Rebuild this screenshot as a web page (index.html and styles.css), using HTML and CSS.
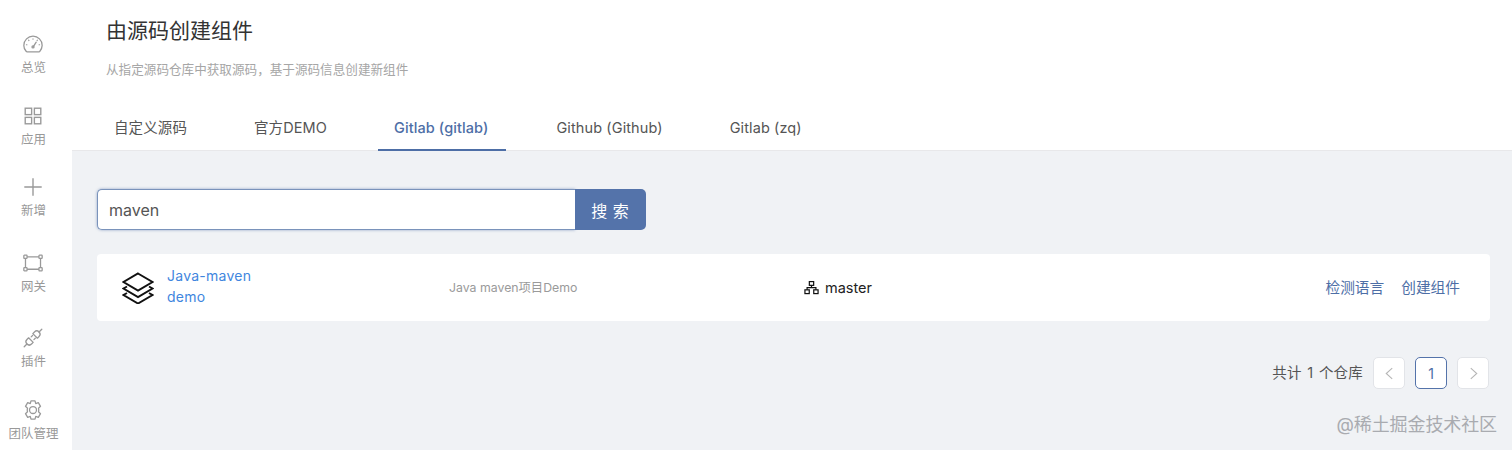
FILE: index.html
```html
<!DOCTYPE html>
<html lang="zh">
<head>
<meta charset="utf-8">
<title>由源码创建组件</title>
<link rel="stylesheet" href="styles.css">
</head>
<body>
<div class="app">
  <nav class="side">
    <a class="nav-item nav-first"><svg class="nav-icon" viewBox="0 0 24 24" fill="none" stroke="currentColor" stroke-width="1.400" stroke-linecap="round" stroke-linejoin="round"><path d="M5.600 20.500h12.800c.5 0 .9-.2 1.100-.6A10.400 10.400 0 0 0 22 13.500C22 8 17.500 3.500 12 3.500S2 8 2 13.500c0 2.400.9 4.700 2.500 6.400.3.400.7.600 1.100.600z"/><path d="M12 15.500l3.500-5.500"/><circle cx="12" cy="15.200" r="1.100"/><path d="M12 6.200v.6M7.200 7.800l.4.5M4.800 12.800h.6M19.200 12.800h-.6M16.800 7.800l-.4.5" stroke-width="1.200"/></svg><span>总览</span></a>
    <a class="nav-item"><svg class="nav-icon" viewBox="0 0 24 24" fill="none" stroke="currentColor" stroke-width="1.500"><rect x="3.500" y="3.500" width="7" height="7"/><rect x="13.500" y="3.500" width="7" height="7"/><rect x="3.500" y="13.500" width="7" height="7"/><rect x="13.500" y="13.500" width="7" height="7"/></svg><span>应用</span></a>
    <a class="nav-item nav-wide"><svg class="nav-icon" viewBox="0 0 24 24" fill="none" stroke="currentColor" stroke-width="1.500"><path d="M12 2.500v19M2.500 12h19"/></svg><span>新增</span></a>
    <a class="nav-item nav-wide"><svg class="nav-icon" viewBox="0 0 24 24" fill="none" stroke="currentColor" stroke-width="1.400"><rect x="2" y="3.500" width="3.500" height="3.500" rx=".6"/><rect x="18.500" y="3.500" width="3.500" height="3.500" rx=".6"/><rect x="2" y="17" width="3.500" height="3.500" rx=".6"/><rect x="18.500" y="17" width="3.500" height="3.500" rx=".6"/><path d="M5.500 5.200h13M5.500 18.800h13M3.800 7v10M20.200 7v10"/></svg><span>网关</span></a>
    <a class="nav-item"><svg class="nav-icon" viewBox="0 0 24 24" fill="none" stroke="currentColor" stroke-width="1.400" stroke-linecap="round" stroke-linejoin="round"><path d="M11.800 7.200l5 5 1.800-1.800a3.500 3.500 0 0 0-5-5z"/><path d="M18.600 5.400l3-3"/><path d="M12.200 16.800l-5-5-1.800 1.800a3.500 3.500 0 0 0 5 5z"/><path d="M5.400 18.600l-3 3"/><path d="M10 10.800l1.500-1.500M13 13.800l1.500-1.500"/></svg><span>插件</span></a>
    <a class="nav-item"><svg class="nav-icon" viewBox="0 0 24 24" fill="none" stroke="currentColor" stroke-width="1.400" stroke-linejoin="round"><path d="M9.800 2h4.400l.8 3 2.800-1 2.400 4-2.200 2.100a6 6 0 0 1 0 3.800l2.200 2.100-2.400 4-2.800-1-.8 3H9.800l-.8-3-2.800 1-2.400-4 2.200-2.100a6 6 0 0 1 0-3.800L3.800 8l2.400-4 2.800 1z"/><circle cx="12" cy="12" r="3.800"/></svg><span>团队管理</span></a>
  </nav>
  <main class="main">
    <header class="head">
      <h1 class="title">由源码创建组件</h1>
      <p class="desc">从指定源码仓库中获取源码，基于源码信息创建新组件</p>
      <div class="tabs">
        <a class="tab">自定义源码</a>
        <a class="tab">官方DEMO</a>
        <a class="tab tab-on">Gitlab (gitlab)</a>
        <a class="tab">Github (Github)</a>
        <a class="tab">Gitlab (zq)</a>
      </div>
    </header>
    <section class="body">
      <form class="search">
        <input class="search-input" type="text" value="maven">
        <button class="search-btn" type="button">搜 索</button>
      </form>
      <div class="repo">
        <svg class="repo-icon" viewBox="0 0 32 32" fill="none" stroke="#111" stroke-width="2" stroke-linejoin="miter"><path d="M16 1.500L30.500 10 16 18.500 1.500 10z"/><path d="M5 14.500L1.500 16.500 16 25l14.500-8.500-3.500-2"/><path d="M5 21L1.500 23 16 31.500 30.500 23 27 21"/></svg>
        <div class="repo-name"><a>Java-maven</a><a>demo</a></div>
        <div class="repo-desc">Java maven项目Demo</div>
        <div class="repo-branch">
          <svg class="branch-icon" viewBox="0 0 16 16" fill="none" stroke="#111" stroke-width="1.300"><rect x="5.700" y="1.700" width="4.600" height="4"/><rect x="1" y="10.500" width="4.600" height="4"/><rect x="10.400" y="10.500" width="4.600" height="4"/><path d="M8 5.700v2.500M3.300 10.500V8.200h9.400v2.300"/></svg>
          <span>master</span>
        </div>
        <div class="repo-actions"><a>检测语言</a><a>创建组件</a></div>
      </div>
      <div class="pager">
        <span class="total">共计 1 个仓库</span>
        <a class="page page-off"><svg viewBox="0 0 12 12" class="chev" fill="none" stroke="currentColor" stroke-width="1"><path d="M8.500 1L3 6l5.500 5"/></svg></a>
        <a class="page page-on">1</a>
        <a class="page page-off"><svg viewBox="0 0 12 12" class="chev" fill="none" stroke="currentColor" stroke-width="1"><path d="M3.500 1L9 6l-5.500 5"/></svg></a>
      </div>
      <div class="mark">@稀土掘金技术社区</div>
    </section>
  </main>
</div>
</body>
</html>
```
FILE: styles.css
```css
* { box-sizing: border-box; }
html, body { margin: 0; height: 450px; overflow: hidden; }
body {
  font-family: Inter, "Noto Sans CJK SC", sans-serif;
  color: #333;
  background: #fff;
}
.app { display: flex; height: 450px; }
.side {
  width: 72px;
  flex: none;
  background: #fff;
  display: flex;
  flex-direction: column;
  align-items: center;
  padding-right: 5px;
  color: #999;
}
.nav-item {
  flex: none;
  display: flex;
  flex-direction: column;
  align-items: center;
  height: 71.500px;
  font-size: 12.500px;
  line-height: 16px;
  white-space: nowrap;
}
.nav-wide { height: 75.500px; }
.nav-first { margin-top: 33px; }
.nav-icon { width: 22px; height: 22px; margin-bottom: 5px; }
.main { flex: 1; min-width: 0; display: flex; flex-direction: column; }
.head { background: #fff; height: 151px; padding: 16px 0 0 34px; border-bottom: 1px solid #e8e8ea; }
.title { margin: 0; font-size: 21px; font-weight: 400; line-height: 30px; color: #333; }
.desc { margin: 16px 0 0; font-size: 12.600px; line-height: 16px; color: #a6a6a6; }
.tabs { display: flex; gap: 35px; margin: 29px 0 0 -8px; height: 44px; }
.tab {
  padding: 0 16px;
  font-size: 14.500px;
  line-height: 42px;
  height: 44px;
  color: #555;
  letter-spacing: .1px;
  border-bottom: 2px solid transparent;
  white-space: nowrap;
}
.tab-on { color: #4d6ea6; font-weight: 500; border-bottom-color: #4d6ea6; padding-right: 18px; margin-right: -1px; }
.body { flex: 1; background: #f0f2f5; padding: 38px 23px 0 25px; position: relative; }
.search { display: flex; width: 549px; height: 41px; }
.search-input {
  flex: 1;
  min-width: 0;
  border: 1px solid #7a93bb;
  border-right: 0;
  border-radius: 5px 0 0 5px;
  padding: 0 11px;
  font: 16px Inter, sans-serif;
  color: #555;
  background: #fff;
  box-shadow: 0 0 3px rgba(77, 110, 166, .6);
  outline: none;
}
.search-btn {
  width: 71px;
  border: 0;
  border-radius: 0 5px 5px 0;
  background: #5473aa;
  color: #fff;
  font: 16px "Noto Sans CJK SC", sans-serif;
  letter-spacing: 1px;
}
.repo {
  display: flex;
  align-items: center;
  height: 67px;
  margin: 24px -1px 0 0;
  background: #fff;
  border-radius: 4px;
  padding: 0 30px 0 25px;
}
.repo-icon { width: 32px; height: 32px; flex: none; }
.repo-name { width: 282px; margin-left: 13px; padding-bottom: 4px; display: flex; flex-direction: column; font-size: 14px; line-height: 21px; color: #3f86de; letter-spacing: .25px; }
.repo-desc { width: 355px; font-size: 12.300px; color: #9a9a9a; padding-bottom: 2px; }
.repo-branch { display: flex; align-items: center; gap: 6px; font-size: 14.500px; color: #222; }
.branch-icon { width: 15px; height: 15px; }
.repo-actions { margin-left: auto; display: flex; gap: 17px; font-size: 14.700px; color: #4d6ea6; padding-bottom: 2px; }
.pager { display: flex; align-items: center; justify-content: flex-end; gap: 10px; margin-top: 36px; height: 32px; }
.total { font-size: 14.500px; color: #555; word-spacing: 1.300px; letter-spacing: .2px; padding-bottom: 3px; }
.page {
  width: 32px;
  height: 32px;
  border: 1px solid #e2e4e8;
  border-radius: 5px;
  background: #fff;
  display: flex;
  align-items: center;
  justify-content: center;
  font-size: 14px;
  color: #4d6ea6;
}
.page-off { color: #b5b5b5; }
.page-on { border-color: #5473aa; }
.chev { width: 13px; height: 13px; }
.mark { position: absolute; right: 15px; bottom: 14px; font-size: 18px; line-height: 22px; color: #a9abb0; letter-spacing: -.1px; }
```
